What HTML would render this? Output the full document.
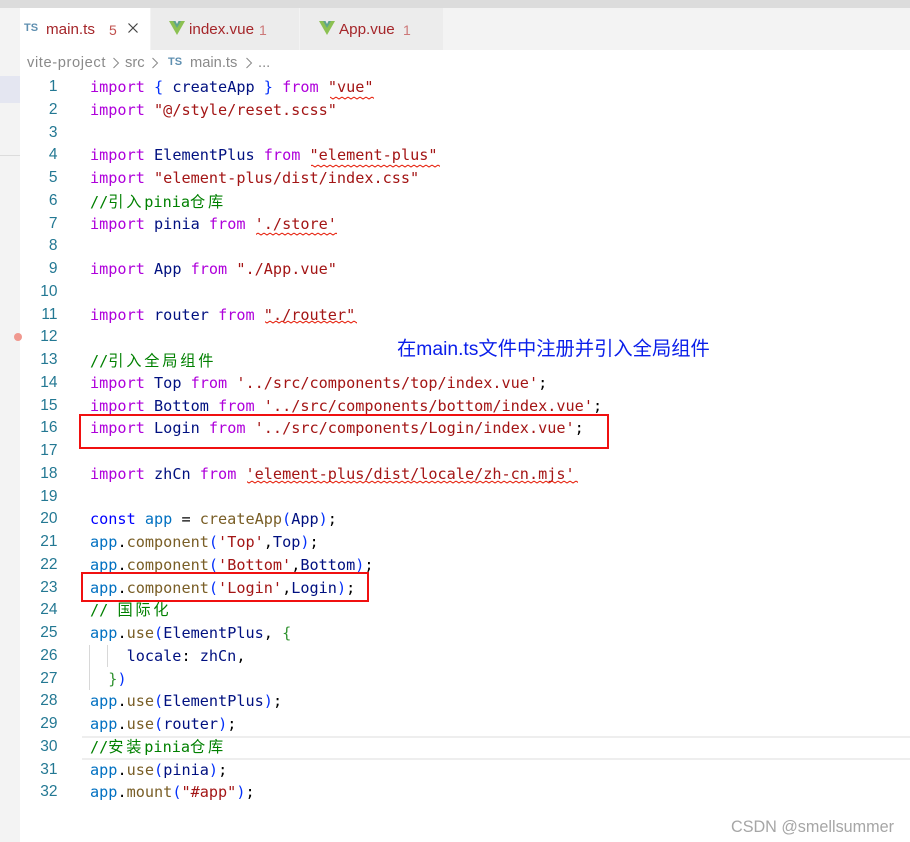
<!DOCTYPE html>
<html><head><meta charset="utf-8">
<style>
html,body{margin:0;padding:0;background:#fff}
#p{position:relative;width:910px;height:842px;overflow:hidden;background:#fff;font-family:"Liberation Sans","Noto Sans CJK SC",sans-serif}
.a{position:absolute}
.l{position:absolute;left:90px;white-space:pre;font:15.2px/22px "DejaVu Sans Mono","Noto Sans CJK SC",monospace;color:#000}
.l i{font-style:normal;letter-spacing:2.8px;font-family:"Noto Sans CJK SC",sans-serif;font-size:15.2px}
.n{position:absolute;left:30px;width:27.5px;text-align:right;font:15.5px/22px "Liberation Sans",sans-serif;color:#237893}
.k{color:#af00db}.v{color:#001080}.s{color:#a31515}.f{color:#795e26}.c{color:#008000}.b{color:#0000ff}.g{color:#319331}.o{color:#0431fa}.p{color:#0070c1}
.t{position:absolute;top:8px;height:42px;line-height:44px;font-size:15.2px;color:#a5262a;white-space:pre}
.ts{position:absolute;font-weight:bold;font-size:11px;color:#5f8fb0}
.red{position:absolute;border:2px solid #f01010;box-sizing:border-box}
.bc{position:absolute;top:53px;font-size:14.7px;line-height:20px;color:#8a8a8a;white-space:pre}
</style></head><body><div id="p">
<div class="a" style="left:0;top:0;width:910px;height:8px;background:#dcdcdc"></div>
<div class="a" style="left:0;top:8px;width:910px;height:42px;background:#f3f3f3"></div>
<div class="a" style="left:0;top:50px;width:20px;height:792px;background:#f3f3f3"></div>
<div class="a" style="left:0;top:76px;width:20px;height:27px;background:#e4e6f1"></div>
<div class="a" style="left:0;top:155px;width:20px;height:1px;background:#dcdcdc"></div>
<div class="a" style="left:20px;top:8px;width:130px;height:42px;background:#fff"></div>
<div class="a" style="left:151px;top:8px;width:148px;height:42px;background:#ececec"></div>
<div class="a" style="left:300px;top:8px;width:143px;height:42px;background:#ececec"></div>

<div class="ts" style="left:24px;top:22px">TS</div>
<div class="t" style="left:46px">main.ts</div>
<div class="t" style="left:109px;color:#c0504d;font-size:14px">5</div>
<svg class="a" style="left:127px;top:22px" width="12" height="12"><path d="M1.5 1.5L10.5 10.5M10.5 1.5L1.5 10.5" stroke="#444" stroke-width="1.2" fill="none"/></svg>

<svg class="a" style="left:169px;top:21px" width="16" height="14"><path d="M0 0H4.5L8 6L11.5 0H16L8 14Z" fill="#8cc152"/><path d="M4 0H6.5L8 3L9.5 0H12L8 7Z" fill="#5fa38c"/></svg>
<div class="t" style="left:189px">index.vue</div>
<div class="t" style="left:259px;color:#c77;font-size:14px">1</div>
<svg class="a" style="left:319px;top:21px" width="16" height="14"><path d="M0 0H4.5L8 6L11.5 0H16L8 14Z" fill="#8cc152"/><path d="M4 0H6.5L8 3L9.5 0H12L8 7Z" fill="#5fa38c"/></svg>
<div class="t" style="left:339px">App.vue</div>
<div class="t" style="left:403px;color:#c77;font-size:14px">1</div>

<div class="bc" style="left:27px;letter-spacing:.6px">vite-project</div>
<svg class="a" style="left:112px;top:57px" width="8" height="12"><path d="M1.5 1L6.5 6L1.5 11" stroke="#888" fill="none"/></svg>
<div class="bc" style="left:125px">src</div>
<svg class="a" style="left:151px;top:57px" width="8" height="12"><path d="M1.5 1L6.5 6L1.5 11" stroke="#888" fill="none"/></svg>
<div class="ts" style="left:168px;top:56px">TS</div>
<div class="bc" style="left:190px">main.ts</div>
<svg class="a" style="left:245px;top:57px" width="8" height="12"><path d="M1.5 1L6.5 6L1.5 11" stroke="#888" fill="none"/></svg>
<div class="bc" style="left:258px">...</div>

<div class="a" style="left:82px;top:736px;width:828px;height:20px;border:solid #eee;border-width:2px 0"></div>
<div class="a" style="left:89px;top:645px;width:1px;height:45px;background:#d8d8d8"></div>
<div class="a" style="left:107px;top:645px;width:1px;height:22px;background:#d8d8d8"></div>
<div class="a" style="left:14px;top:333px;width:8px;height:8px;border-radius:50%;background:#f0988f"></div>

<div class="n" style="top:76px">1</div><div class="l" style="top:76px"><span class="k">import</span> <span class="o">{</span> <span class="v">createApp</span> <span class="o">}</span> <span class="k">from</span> <span class="s">"vue"</span></div>
<div class="n" style="top:99px">2</div><div class="l" style="top:99px"><span class="k">import</span> <span class="s">"@/style/reset.scss"</span></div>
<div class="n" style="top:122px">3</div>
<div class="n" style="top:144px">4</div><div class="l" style="top:144px"><span class="k">import</span> <span class="v">ElementPlus</span> <span class="k">from</span> <span class="s">"element-plus"</span></div>
<div class="n" style="top:167px">5</div><div class="l" style="top:167px"><span class="k">import</span> <span class="s">"element-plus/dist/index.css"</span></div>
<div class="n" style="top:190px">6</div><div class="l c" style="top:190px">//<i>引入</i>pinia<i>仓库</i></div>
<div class="n" style="top:213px">7</div><div class="l" style="top:213px"><span class="k">import</span> <span class="v">pinia</span> <span class="k">from</span> <span class="s">'./store'</span></div>
<div class="n" style="top:235px">8</div>
<div class="n" style="top:258px">9</div><div class="l" style="top:258px"><span class="k">import</span> <span class="v">App</span> <span class="k">from</span> <span class="s">"./App.vue"</span></div>
<div class="n" style="top:281px">10</div>
<div class="n" style="top:304px">11</div><div class="l" style="top:304px"><span class="k">import</span> <span class="v">router</span> <span class="k">from</span> <span class="s">"./router"</span></div>
<div class="n" style="top:326px">12</div>
<div class="n" style="top:349px">13</div><div class="l c" style="top:349px">//<i>引入全局组件</i></div>
<div class="n" style="top:372px">14</div><div class="l" style="top:372px"><span class="k">import</span> <span class="v">Top</span> <span class="k">from</span> <span class="s">'../src/components/top/index.vue'</span>;</div>
<div class="n" style="top:395px">15</div><div class="l" style="top:395px"><span class="k">import</span> <span class="v">Bottom</span> <span class="k">from</span> <span class="s">'../src/components/bottom/index.vue'</span>;</div>
<div class="n" style="top:417px">16</div><div class="l" style="top:417px"><span class="k">import</span> <span class="v">Login</span> <span class="k">from</span> <span class="s">'../src/components/Login/index.vue'</span>;</div>
<div class="n" style="top:440px">17</div>
<div class="n" style="top:463px">18</div><div class="l" style="top:463px"><span class="k">import</span> <span class="v">zhCn</span> <span class="k">from</span> <span class="s">'element-plus/dist/locale/zh-cn.mjs'</span></div>
<div class="n" style="top:486px">19</div>
<div class="n" style="top:508px">20</div><div class="l" style="top:508px"><span class="b">const</span> <span class="p">app</span> = <span class="f">createApp</span><span class="o">(</span><span class="v">App</span><span class="o">)</span>;</div>
<div class="n" style="top:531px">21</div><div class="l" style="top:531px"><span class="p">app</span>.<span class="f">component</span><span class="o">(</span><span class="s">'Top'</span>,<span class="v">Top</span><span class="o">)</span>;</div>
<div class="n" style="top:554px">22</div><div class="l" style="top:554px"><span class="p">app</span>.<span class="f">component</span><span class="o">(</span><span class="s">'Bottom'</span>,<span class="v">Bottom</span><span class="o">)</span>;</div>
<div class="n" style="top:577px">23</div><div class="l" style="top:577px"><span class="p">app</span>.<span class="f">component</span><span class="o">(</span><span class="s">'Login'</span>,<span class="v">Login</span><span class="o">)</span>;</div>
<div class="n" style="top:599px">24</div><div class="l c" style="top:598px">// <i>国际化</i></div>
<div class="n" style="top:622px">25</div><div class="l" style="top:622px"><span class="p">app</span>.<span class="f">use</span><span class="o">(</span><span class="v">ElementPlus</span>, <span class="g">{</span></div>
<div class="n" style="top:645px">26</div><div class="l" style="top:645px">    <span class="v">locale</span>: <span class="v">zhCn</span>,</div>
<div class="n" style="top:668px">27</div><div class="l" style="top:668px">  <span class="g">}</span><span class="o">)</span></div>
<div class="n" style="top:690px">28</div><div class="l" style="top:690px"><span class="p">app</span>.<span class="f">use</span><span class="o">(</span><span class="v">ElementPlus</span><span class="o">)</span>;</div>
<div class="n" style="top:713px">29</div><div class="l" style="top:713px"><span class="p">app</span>.<span class="f">use</span><span class="o">(</span><span class="v">router</span><span class="o">)</span>;</div>
<div class="n" style="top:736px">30</div><div class="l c" style="top:735px">//<i>安装</i>pinia<i>仓库</i></div>
<div class="n" style="top:759px">31</div><div class="l" style="top:759px"><span class="p">app</span>.<span class="f">use</span><span class="o">(</span><span class="v">pinia</span><span class="o">)</span>;</div>
<div class="n" style="top:781px">32</div><div class="l" style="top:781px"><span class="p">app</span>.<span class="f">mount</span><span class="o">(</span><span class="s">"#app"</span><span class="o">)</span>;</div>

<svg class="a" style="left:0;top:0" width="910" height="842">
<defs><pattern id="w" width="6" height="4" patternUnits="userSpaceOnUse"><path d="M0 1L3 3L6 1" fill="none" stroke="#e51400" stroke-width="1"/></pattern></defs>
<rect x="330" y="96" width="44" height="4" fill="url(#w)"/>
<rect x="311" y="164" width="129" height="4" fill="url(#w)"/>
<rect x="256" y="232" width="81" height="4" fill="url(#w)"/>
<rect x="265" y="320" width="92" height="4" fill="url(#w)"/>
<rect x="247" y="480" width="331" height="4" fill="url(#w)"/>
</svg>

<div class="red" style="left:79px;top:414px;width:530px;height:35px"></div>
<div class="red" style="left:81px;top:572px;width:288px;height:30px"></div>

<div class="a" style="left:397px;top:338px;font-size:19.3px;line-height:24px;color:#0a1eea;white-space:pre">在main.ts文件中注册并引入全局组件</div>
<div class="a" style="left:731px;top:817px;font-size:16.2px;line-height:20px;color:#a6a6a6;white-space:pre">CSDN @smellsummer</div>
</div></body></html>
